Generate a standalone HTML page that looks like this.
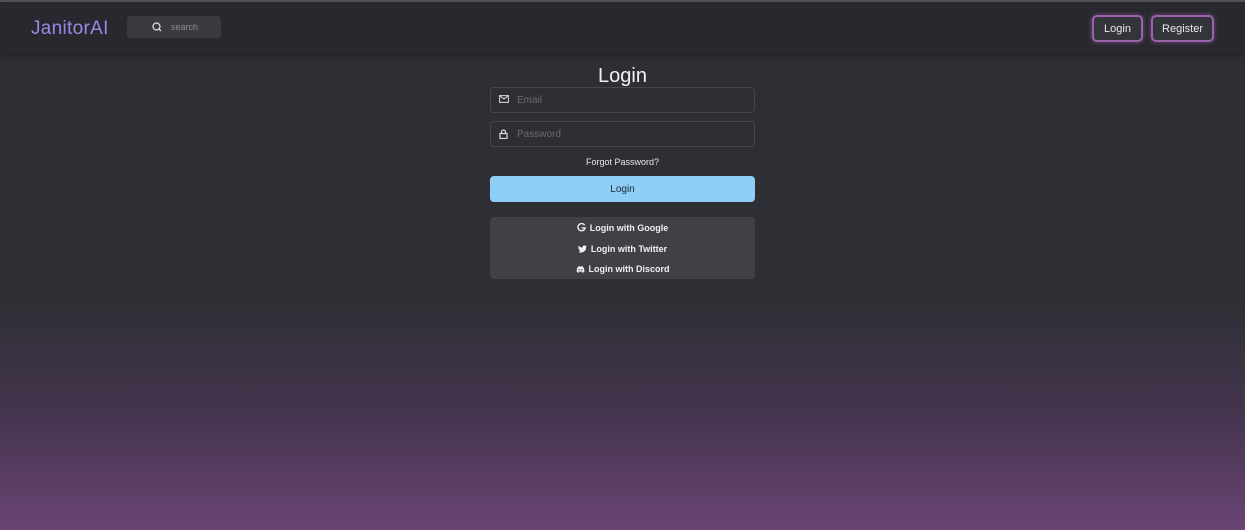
<!DOCTYPE html>
<html><head><style>
*{box-sizing:border-box;margin:0;padding:0}
body{width:1245px;height:530px;overflow:hidden;font-family:"Liberation Sans",sans-serif;background:linear-gradient(180deg,#2e2f35 0px,#2e2f35 300px,#463550 420px,#6a4474 530px);position:relative;color:#fff}
.top{position:absolute;left:0;top:0;width:1245px;height:2px;background:#55565c}
.hdr{position:absolute;left:0;top:2px;width:1245px;height:51px;background:#28292e;box-shadow:0 2px 6px rgba(0,0,0,.35)}
.logo{position:absolute;left:31px;top:16px;font-size:19px;color:#9e86e6;letter-spacing:.3px}
.search{position:absolute;left:127px;top:14px;width:94px;height:22px;background:#3a3b41;border-radius:4px;font-size:9px;color:#8a8b90;padding:6px 0 0 44px}
.search svg{position:absolute;left:25px;top:6px}
.btn{position:absolute;top:13px;height:27px;border:2px solid #9a62aa;border-radius:5px;background:#34353b;color:#e8e8ec;font-size:11px;text-align:center;line-height:24px;box-shadow:0 0 5px rgba(180,100,200,.6)}
h1{position:absolute;left:490px;width:265px;top:65px;text-align:center;font-size:20px;font-weight:normal;color:#f2f2f4}
.inp{position:absolute;left:490px;width:265px;height:26px;border:1px solid #45464c;border-radius:4px;font-size:10px;color:#6a6b70;padding:7px 0 0 26px}
.inp svg{position:absolute;left:8px;top:7px}
.fp{position:absolute;left:490px;width:265px;top:157px;text-align:center;font-size:9px;color:#e8e8ea}
.lb{position:absolute;left:490px;top:176px;width:265px;height:26px;background:#8ecdf5;border-radius:4px;color:#1d2a36;text-align:center;font-size:10px;line-height:27px}
.soc{position:absolute;left:490px;top:217px;width:265px;height:62px;background:#404146;border-radius:4px}
.soc div{height:20.5px;line-height:22px;text-align:center;font-size:9px;font-weight:bold;color:#f0f0f2}
.soc svg{vertical-align:-1px;margin-right:4px}
</style></head><body>
<div class="top"></div>
<div class="hdr">
<div class="logo">JanitorAI</div>
<div class="search"><svg width="10" height="10" viewBox="0 0 10 10"><circle cx="4.5" cy="4.5" r="3.5" stroke="#ddd" stroke-width="1.3" fill="none"/><path d="M7 7l2 2" stroke="#ddd" stroke-width="1.3"/></svg>search</div>
<div class="btn" style="left:1092px;width:51px">Login</div>
<div class="btn" style="left:1151px;width:63px">Register</div>
</div>
<h1>Login</h1>
<div class="inp" style="top:87px"><svg width="10" height="8" viewBox="0 0 10 8"><rect x="0.6" y="0.6" width="8.8" height="6.8" stroke="#ccc" fill="none" stroke-width="1.1"/><path d="M1 1l4 3 4-3" stroke="#ccc" fill="none" stroke-width="1.1"/></svg>Email</div>
<div class="inp" style="top:121px"><svg width="9" height="10" viewBox="0 0 9 10"><rect x="1" y="4.5" width="7" height="5" stroke="#ddd" fill="none" stroke-width="1.2"/><path d="M2.5 4.5V3a2 2 0 0 1 4 0v1.5" stroke="#ddd" fill="none" stroke-width="1.2"/></svg>Password</div>
<div class="fp">Forgot Password?</div>
<div class="lb">Login</div>
<div class="soc">
<div><svg width="9" height="9" viewBox="0 0 10 10"><path d="M8.5 2.5A4 4 0 1 0 9 5.5H5" stroke="#eee" stroke-width="1.6" fill="none"/></svg>Login with Google</div>
<div><svg width="9" height="8" viewBox="0 0 10 8"><path d="M10 1c-.4.2-.8.3-1.2.3.4-.3.8-.7.9-1.1-.4.2-.8.4-1.3.5A2 2 0 0 0 5 2.5 5.8 5.8 0 0 1 .7.4a2 2 0 0 0 .6 2.7c-.3 0-.6-.1-.9-.3 0 1 .7 1.8 1.6 2a2 2 0 0 1-.9 0c.3.8 1 1.4 1.9 1.4A4 4 0 0 1 0 7.1 5.8 5.8 0 0 0 9 2.2V2c.4-.3.7-.6 1-1z" fill="#eee"/></svg>Login with Twitter</div>
<div><svg width="9" height="7" viewBox="0 0 10 8"><path d="M2 1c1-.6 2-.8 2-.8l.3.5h1.4l.3-.5s1 .2 2 .8c1 1.5 1.5 3.5 1.4 5.5-.8.7-1.8 1.1-2.4 1.2l-.6-.9c.4-.1.7-.3 1-.5l-.3-.2C6 6.600 4 6.6 2.9 6.1l-.3.2c.3.2.6.4 1 .5l-.6.9C2.4 7.6 1.4 7.2.6 6.5.5 4.5 1 2.5 2 1z" fill="#eee"/><circle cx="3.5" cy="4.3" r=".8" fill="#404146"/><circle cx="6.5" cy="4.3" r=".8" fill="#404146"/></svg>Login with Discord</div>
</div>
</body></html>
